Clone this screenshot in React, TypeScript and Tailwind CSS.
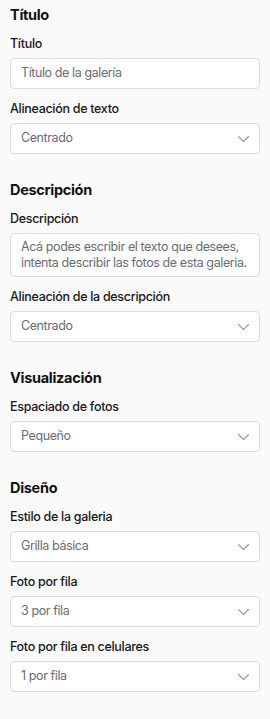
import React from "react";

const Chevron = () => (
  <svg width="11" height="6" viewBox="0 0 11 6" fill="none" className="shrink-0">
    <path d="M0.5 0.5L5.5 5.5L10.5 0.5" stroke="#9a9a9a" strokeWidth="1.1" strokeLinecap="round" strokeLinejoin="round" />
  </svg>
);

const Label = ({ children }: { children: React.ReactNode }) => (
  <label className="block h-4 text-[12.5px] leading-4 font-medium tracking-[-0.3px] text-[#171717] mb-[6px]">
    {children}
  </label>
);

const SelectBox = ({ label, value }: { label: string; value: string }) => (
  <div>
    <Label>{label}</Label>
    <div className="h-[31px] flex items-center justify-between pl-[10px] pr-[10px] bg-white border border-[#dcdcdc] rounded-[4px]">
      <span className="text-[12.5px] tracking-[-0.4px] text-[#6b6b73]">{value}</span>
      <Chevron />
    </div>
  </div>
);

const Section = ({ title, children }: { title: string; children: React.ReactNode }) => (
  <section>
    <h2 className="h-5 text-[14.5px] leading-5 font-bold tracking-[-0.3px] text-[#111] mb-[11px]">{title}</h2>
    <div className="flex flex-col gap-[12px]">{children}</div>
  </section>
);

export default function App() {
  return (
    <div
      className="min-h-[719px] w-[270px] bg-[#fafafa] px-[10px] pt-[5px] flex flex-col gap-[26px]"
      style={{ fontFamily: "Inter, 'Noto Sans', sans-serif" }}
    >
      <Section title="Título">
        <div>
          <Label>Título</Label>
          <div className="h-[31px] flex items-center px-[10px] bg-white border border-[#dcdcdc] rounded-[4px]">
            <span className="text-[12.5px] tracking-[-0.4px] text-[#6b6b73]">Título de la galería</span>
          </div>
        </div>
        <SelectBox label="Alineación de texto" value="Centrado" />
      </Section>

      <Section title="Descripción">
        <div>
          <Label>Descripción</Label>
          <div className="h-[44px] px-[10px] pt-[5px] bg-white border border-[#dcdcdc] rounded-[4px]">
            <p className="text-[12.5px] leading-[15.5px] tracking-[-0.4px] text-[#6b6b73]">
              Acá podes escribir el texto que desees, intenta describir las fotos de esta galeria.
            </p>
          </div>
        </div>
        <SelectBox label="Alineación de la descripción" value="Centrado" />
      </Section>

      <Section title="Visualización">
        <SelectBox label="Espaciado de fotos" value="Pequeño" />
      </Section>

      <Section title="Diseño">
        <SelectBox label="Estilo de la galeria" value="Grilla básica" />
        <SelectBox label="Foto por fila" value="3 por fila" />
        <SelectBox label="Foto por fila en celulares" value="1 por fila" />
      </Section>
    </div>
  );
}
